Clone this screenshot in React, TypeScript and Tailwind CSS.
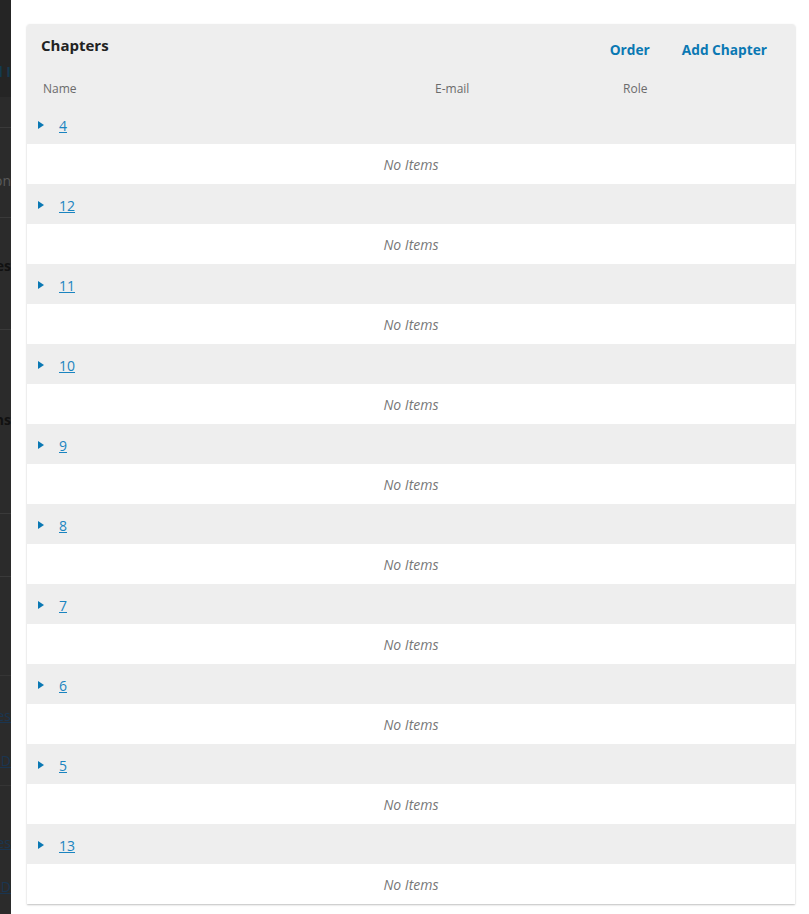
import React from 'react';

const chapters = ['4', '12', '11', '10', '9', '8', '7', '6', '5', '13'];

function Caret() {
  return (
    <svg width="6" height="8" viewBox="0 0 6 8" className="mt-[2px] shrink-0">
      <path d="M0 0 L6 4 L0 8 Z" fill="#0a78b3" />
    </svg>
  );
}

function BackdropStrip() {
  return (
    <div className="flex w-[11px] shrink-0 flex-col bg-[#2b2b2b] text-[14px] leading-[20px]">
      <div className="flex h-[97px] justify-end overflow-hidden bg-[#252525] pt-[62px]">
        <span className="whitespace-nowrap font-bold text-[#16394f]">ol I</span>
      </div>
      <div className="h-[31px] border-b border-[#3a3a3a]" />
      <div className="flex h-[90px] justify-end overflow-hidden border-b border-[#3a3a3a] pt-[43px]">
        <span className="whitespace-nowrap text-[#5a5a5a]">on</span>
      </div>
      <div className="flex h-[112px] justify-end overflow-hidden border-b border-[#3a3a3a] pt-[38px]">
        <span className="whitespace-nowrap font-bold text-[#111]">ages</span>
      </div>
      <div className="flex h-[184px] justify-end overflow-hidden border-b border-[#3a3a3a] pt-[80px]">
        <span className="whitespace-nowrap font-bold text-[#111]">ons</span>
      </div>
      <div className="h-[63px] border-b border-[#3a3a3a]" />
      <div className="h-[99px] border-b border-[#353535]" />
      <div className="flex h-[110px] flex-col items-end overflow-hidden border-b border-[#353535] pt-[30px]">
        <span className="whitespace-nowrap text-[#1a3550] underline">Files</span>
        <span className="mt-[25px] whitespace-nowrap text-[#1a3550] underline">a D</span>
      </div>
      <div className="flex flex-1 flex-col items-end overflow-hidden pt-[47px]">
        <span className="whitespace-nowrap text-[#1a3550] underline">Files</span>
        <span className="mt-[24px] whitespace-nowrap text-[#1a3550] underline">a D</span>
      </div>
    </div>
  );
}

export default function App() {
  return (
    <div className="flex h-[914px] w-[809px] overflow-hidden bg-white font-['Open_Sans',sans-serif]">
      <BackdropStrip />
      <div className="flex-1 pl-4 pr-[14px] pt-6">
        <section className="rounded-t-[3px] bg-white shadow-[0_1px_2px_rgba(0,0,0,0.25)]">
          <div className="rounded-t-[3px] bg-[#eeeeee]">
            <div className="flex h-[52px] justify-between pl-[14px] pr-[28px]">
              <h2 className="pt-[11px] text-[15px] font-bold leading-[20px] text-[#222]">Chapters</h2>
              <div className="flex gap-8 pt-[16px] text-[13.7px] font-bold leading-[20px] text-[#0a78b3]">
                <a href="#">Order</a>
                <a href="#">Add Chapter</a>
              </div>
            </div>
            <div className="grid h-[28px] grid-cols-[392px_188px_1fr] pl-4 text-[12px] leading-[26px] text-[#6b6b6b]">
              <span>Name</span>
              <span>E-mail</span>
              <span>Role</span>
            </div>
          </div>
          {chapters.map((name) => (
            <div key={name}>
              <div className="flex h-10 items-center gap-[15px] bg-[#eeeeee] pl-[11px]">
                <Caret />
                <a href="#" className="mt-[4px] text-[14px] leading-[20px] text-[#1a84c0] underline">
                  {name}
                </a>
              </div>
              <div className="flex h-10 items-center justify-center text-[14px] italic text-[#777]">No Items</div>
            </div>
          ))}
        </section>
      </div>
    </div>
  );
}
